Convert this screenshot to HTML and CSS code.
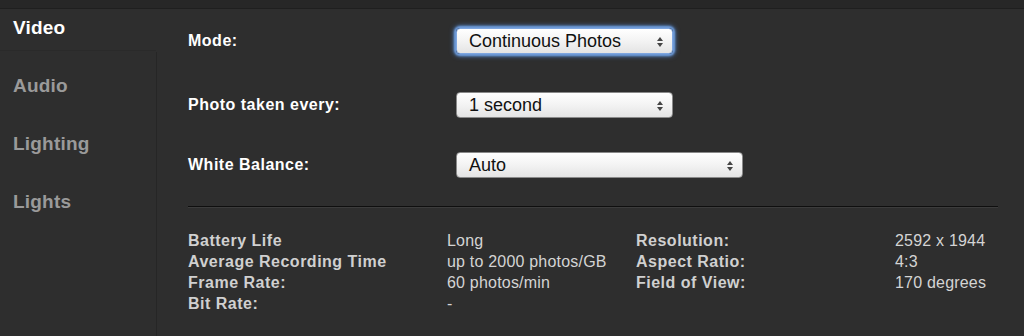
FILE: index.html
```html
<!DOCTYPE html>
<html>
<head>
    <title>Camera Settings</title>
    <meta charset="UTF-8">
    <link rel="stylesheet" href="styles.css">
</head>
<body>
    <div class="topbar"></div>

    <div class="layout">
        <div class="nav">
            <div class="nav-item active">Video</div>
            <div class="nav-rest">
                <div class="nav-item">Audio</div>
                <div class="nav-item">Lighting</div>
                <div class="nav-item">Lights</div>
            </div>
        </div>

        <div class="panel">
            <div class="row first">
                <div class="label">Mode:</div>
                <div class="select focused w1">Continuous Photos<span class="arrows"></span></div>
            </div>
            <div class="row second">
                <div class="label">Photo taken every:</div>
                <div class="select w1">1 second<span class="arrows"></span></div>
            </div>
            <div class="row">
                <div class="label">White Balance:</div>
                <div class="select w2">Auto<span class="arrows"></span></div>
            </div>

            <hr class="divider">

            <div class="info">
                <div class="k">Battery Life</div><div class="v">Long</div>
                <div class="k">Resolution:</div><div class="v">2592 x 1944</div>
                <div class="k">Average Recording Time</div><div class="v">up to 2000 photos/GB</div>
                <div class="k">Aspect Ratio:</div><div class="v">4:3</div>
                <div class="k">Frame Rate:</div><div class="v">60 photos/min</div>
                <div class="k">Field of View:</div><div class="v">170 degrees</div>
                <div class="k">Bit Rate:</div><div class="v">-</div>
            </div>
        </div>
    </div>
</body>
</html>
```

FILE: styles.css
```css
body {
    margin: 0;
    background: #2e2e2e;
    font-family: 'Liberation Sans', Arial, sans-serif;
    color: #ffffff;
    height: 336px;
    overflow: hidden;
}

.topbar {
    height: 8px;
    background: #272727;
    border-bottom: 1px solid #1f1f1f;
}

.layout {
    display: flex;
    height: 327px;
}

.nav {
    width: 156px;
    display: flex;
    flex-direction: column;
}

.nav-item {
    font-size: 19px;
    font-weight: bold;
    letter-spacing: 0.2px;
    color: #9a9a9a;
    padding-left: 13px;
    height: 58px;
    line-height: 20px;
}

.nav-item.active {
    color: #ffffff;
    height: 32px;
    padding-top: 9px;
}

.nav-rest {
    flex: 1;
    padding-top: 25px;
    border-top: 1px solid #2a2a2a;
}

.panel {
    flex: 1;
    border-left: 1px solid #262626;
    margin-top: 43px;
    padding: 0 26px 0 31px;
}

.row {
    display: flex;
    align-items: center;
    height: 26px;
    margin-bottom: 34px;
}

.row.first {
    margin-top: -24px;
    margin-bottom: 38px;
}

.label {
    width: 268px;
    font-size: 16px;
    font-weight: bold;
    letter-spacing: 0.5px;
    color: #ffffff;
}

.select {
    position: relative;
    box-sizing: border-box;
    height: 26px;
    padding: 2px 0 0 12px;
    font-size: 18px;
    line-height: 20px;
    color: #111;
    background: linear-gradient(#ffffff, #f3f3f3 50%, #e4e4e4);
    border: 1px solid #8a8a8a;
    border-radius: 4px;
}

.select.focused {
    box-shadow: 0 0 2px 2px #6f9bd8, 0 0 5px 2px #4d7fc4;
    border-color: #7ea6e0;
}

.w1 {
    width: 217px;
}

.w2 {
    width: 287px;
}

.arrows {
    position: absolute;
    right: 9px;
    top: 8px;
    width: 0;
    height: 0;
    border-left: 3.5px solid transparent;
    border-right: 3.5px solid transparent;
    border-bottom: 4px solid #444;
}

.arrows::after {
    content: '';
    position: absolute;
    left: -3.5px;
    top: 6px;
    border-left: 3.5px solid transparent;
    border-right: 3.5px solid transparent;
    border-top: 4px solid #444;
}

.divider {
    margin: -6px 0 0 0;
    border: none;
    border-top: 1px solid #0f0f0f;
    border-bottom: 1px solid #3c3c3c;
    height: 0;
}

.info {
    display: grid;
    grid-template-columns: 259px 189px 259px auto;
    margin-top: 22px;
    font-size: 16px;
    line-height: 21px;
    color: #d4d4d4;
}

.k {
    font-weight: bold;
    letter-spacing: 0.5px;
    color: #d0d0d0;
}

.v {
    letter-spacing: 0.2px;
}
```
